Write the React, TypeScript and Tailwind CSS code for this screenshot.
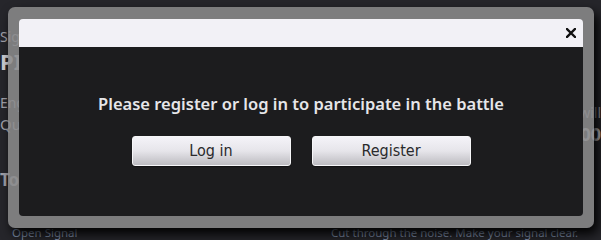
import React from 'react';

const Page = () => (
  <div className="flex h-[240px] w-[601px] flex-col justify-between bg-[#26262b] font-['Noto_Sans',sans-serif] text-[#a2a2aa]">
    <div className="flex justify-between pt-[28px]">
      <div className="flex flex-col">
        <span className="text-[14px] leading-[18px]">Signal</span>
        <span className="text-[22px] font-bold leading-[30px] text-[#d0d0d6]">PIONEER</span>
        <span className="mt-[18px] text-[14px] leading-[18px]">Engagement</span>
        <span className="text-[15px] leading-[24px]">Quality</span>
        <span className="mt-[34px] text-[17px] font-bold leading-[20px]">Topics</span>
      </div>
      <div className="flex flex-col items-end pt-[76px]">
        <span className="text-[14px] leading-[18px]">will</span>
        <span className="text-[18px] font-bold leading-[24px] text-[#c9c9cf]">00</span>
      </div>
    </div>
    <div className="flex justify-between px-[12px] text-[11.5px] leading-[14px] text-[#8494b0]">
      <span>Open Signal</span>
      <span className="pr-[11px]">Cut through the noise. Make your signal clear.</span>
    </div>
  </div>
);

const CloseIcon = () => (
  <svg width="10" height="10" viewBox="0 0 10 10">
    <path d="M1 1 L9 9 M9 1 L1 9" stroke="#111" strokeWidth="2.4" strokeLinecap="square" />
  </svg>
);

const GlossButton = ({ label }: { label: string }) => (
  <button className="h-[30px] w-[159px] rounded-[3px] border border-[#f6f6f8] bg-gradient-to-b from-[#f4f3f8] via-[#e6e5ea] to-[#bdbcc1] font-['DejaVu_Sans_Condensed','Liberation_Sans_Narrow',sans-serif] text-[16px] text-[#2a2a2c] shadow-[0_1px_1px_rgba(0,0,0,0.4)]">
    {label}
  </button>
);

export default function App() {
  return (
    <div className="relative h-[240px] w-[601px] overflow-hidden">
      <Page />
      <div className="absolute left-[8px] top-[7px] h-[221px] w-[586px] rounded-[7px] bg-[#8a8a8cdd] px-[11px] py-[12px] shadow-[4px_6px_12px_#000000]">
        <div className="flex h-full flex-col overflow-hidden rounded-[4px]">
          <div className="flex h-[28px] items-center justify-end bg-[#f2f1f6] pr-[7px]">
            <CloseIcon />
          </div>
          <div className="flex flex-1 flex-col items-center bg-[#1c1c1e] pt-[46px]">
            <p className="font-['Noto_Sans',sans-serif] text-[16.5px] font-semibold leading-[22px] text-[#e6e6e9]">
              Please register or log in to participate in the battle
            </p>
            <div className="mt-[21px] flex gap-[21px]">
              <GlossButton label="Log in" />
              <GlossButton label="Register" />
            </div>
          </div>
        </div>
      </div>
    </div>
  );
}
